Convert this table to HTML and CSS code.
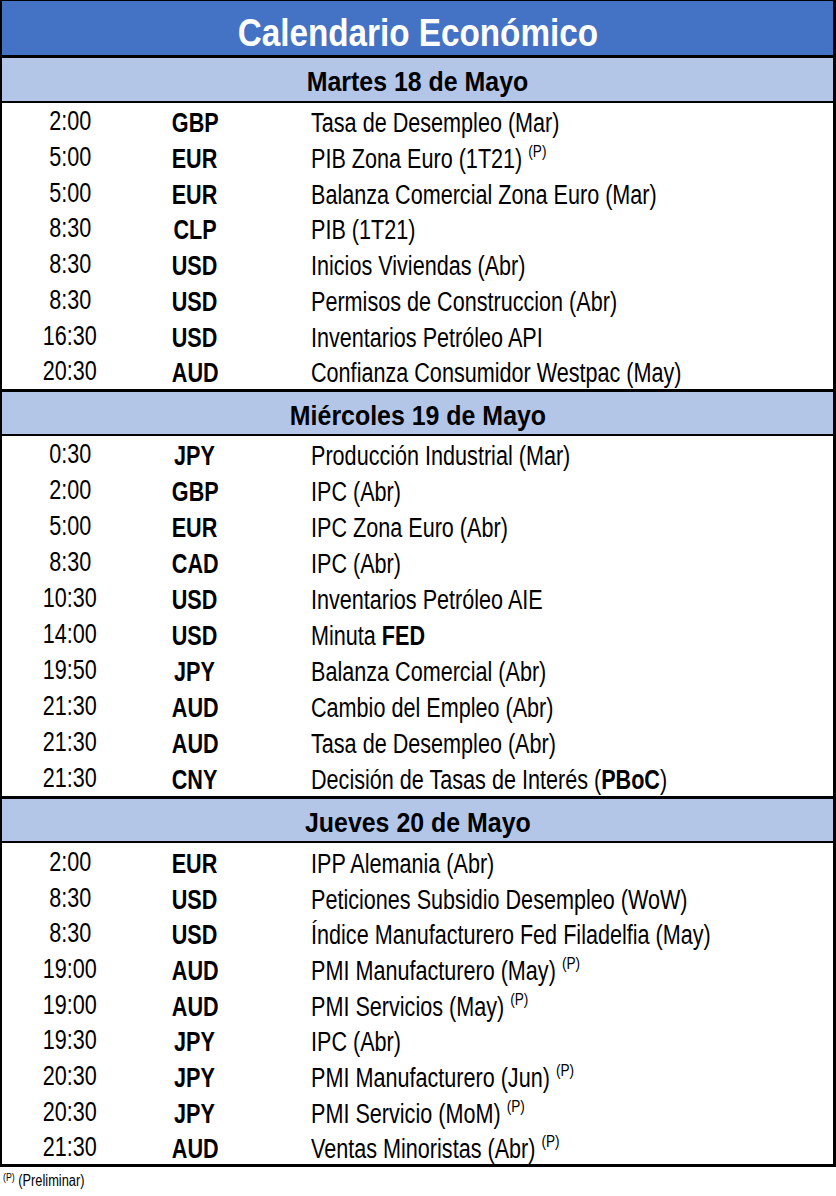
FILE: index.html
```html
<!DOCTYPE html>
<html lang="es">
<head>
<meta charset="utf-8">
<title>Calendario Económico</title>
<link rel="stylesheet" href="styles.css">
</head>
<body>
<div class="cal">
  <div class="title"><span class="nx">Calendario Económico</span></div>

  <div class="day first"><span class="nx">Martes 18 de Mayo</span></div>
  <div class="rows">
    <div class="row"><span class="t"><span class="nx">2:00</span></span><span class="c"><span class="nx">GBP</span></span><span class="d"><span class="nx">Tasa de Desempleo (Mar)</span></span></div>
    <div class="row"><span class="t"><span class="nx">5:00</span></span><span class="c"><span class="nx">EUR</span></span><span class="d"><span class="nx">PIB Zona Euro (1T21) <sup>(P)</sup></span></span></div>
    <div class="row"><span class="t"><span class="nx">5:00</span></span><span class="c"><span class="nx">EUR</span></span><span class="d"><span class="nx">Balanza Comercial Zona Euro (Mar)</span></span></div>
    <div class="row"><span class="t"><span class="nx">8:30</span></span><span class="c"><span class="nx">CLP</span></span><span class="d"><span class="nx">PIB (1T21)</span></span></div>
    <div class="row"><span class="t"><span class="nx">8:30</span></span><span class="c"><span class="nx">USD</span></span><span class="d"><span class="nx">Inicios Viviendas (Abr)</span></span></div>
    <div class="row"><span class="t"><span class="nx">8:30</span></span><span class="c"><span class="nx">USD</span></span><span class="d"><span class="nx">Permisos de Construccion (Abr)</span></span></div>
    <div class="row"><span class="t"><span class="nx">16:30</span></span><span class="c"><span class="nx">USD</span></span><span class="d"><span class="nx">Inventarios Petróleo API</span></span></div>
    <div class="row"><span class="t"><span class="nx">20:30</span></span><span class="c"><span class="nx">AUD</span></span><span class="d"><span class="nx">Confianza Consumidor Westpac (May)</span></span></div>
  </div>

  <div class="day"><span class="nx">Miércoles 19 de Mayo</span></div>
  <div class="rows mid">
    <div class="row"><span class="t"><span class="nx">0:30</span></span><span class="c"><span class="nx">JPY</span></span><span class="d"><span class="nx">Producción Industrial (Mar)</span></span></div>
    <div class="row"><span class="t"><span class="nx">2:00</span></span><span class="c"><span class="nx">GBP</span></span><span class="d"><span class="nx">IPC (Abr)</span></span></div>
    <div class="row"><span class="t"><span class="nx">5:00</span></span><span class="c"><span class="nx">EUR</span></span><span class="d"><span class="nx">IPC Zona Euro (Abr)</span></span></div>
    <div class="row"><span class="t"><span class="nx">8:30</span></span><span class="c"><span class="nx">CAD</span></span><span class="d"><span class="nx">IPC (Abr)</span></span></div>
    <div class="row"><span class="t"><span class="nx">10:30</span></span><span class="c"><span class="nx">USD</span></span><span class="d"><span class="nx">Inventarios Petróleo AIE</span></span></div>
    <div class="row"><span class="t"><span class="nx">14:00</span></span><span class="c"><span class="nx">USD</span></span><span class="d"><span class="nx">Minuta <b>FED</b></span></span></div>
    <div class="row"><span class="t"><span class="nx">19:50</span></span><span class="c"><span class="nx">JPY</span></span><span class="d"><span class="nx">Balanza Comercial (Abr)</span></span></div>
    <div class="row"><span class="t"><span class="nx">21:30</span></span><span class="c"><span class="nx">AUD</span></span><span class="d"><span class="nx">Cambio del Empleo (Abr)</span></span></div>
    <div class="row"><span class="t"><span class="nx">21:30</span></span><span class="c"><span class="nx">AUD</span></span><span class="d"><span class="nx">Tasa de Desempleo (Abr)</span></span></div>
    <div class="row"><span class="t"><span class="nx">21:30</span></span><span class="c"><span class="nx">CNY</span></span><span class="d"><span class="nx">Decisión de Tasas de Interés (<b>PBoC</b>)</span></span></div>
  </div>

  <div class="day"><span class="nx">Jueves 20 de Mayo</span></div>
  <div class="rows last">
    <div class="row"><span class="t"><span class="nx">2:00</span></span><span class="c"><span class="nx">EUR</span></span><span class="d"><span class="nx">IPP Alemania (Abr)</span></span></div>
    <div class="row"><span class="t"><span class="nx">8:30</span></span><span class="c"><span class="nx">USD</span></span><span class="d"><span class="nx">Peticiones Subsidio Desempleo (WoW)</span></span></div>
    <div class="row"><span class="t"><span class="nx">8:30</span></span><span class="c"><span class="nx">USD</span></span><span class="d"><span class="nx">Índice Manufacturero Fed Filadelfia (May)</span></span></div>
    <div class="row"><span class="t"><span class="nx">19:00</span></span><span class="c"><span class="nx">AUD</span></span><span class="d"><span class="nx">PMI Manufacturero (May) <sup>(P)</sup></span></span></div>
    <div class="row"><span class="t"><span class="nx">19:00</span></span><span class="c"><span class="nx">AUD</span></span><span class="d"><span class="nx">PMI Servicios (May) <sup>(P)</sup></span></span></div>
    <div class="row"><span class="t"><span class="nx">19:30</span></span><span class="c"><span class="nx">JPY</span></span><span class="d"><span class="nx">IPC (Abr)</span></span></div>
    <div class="row"><span class="t"><span class="nx">20:30</span></span><span class="c"><span class="nx">JPY</span></span><span class="d"><span class="nx">PMI Manufacturero (Jun) <sup>(P)</sup></span></span></div>
    <div class="row"><span class="t"><span class="nx">20:30</span></span><span class="c"><span class="nx">JPY</span></span><span class="d"><span class="nx">PMI Servicio (MoM) <sup>(P)</sup></span></span></div>
    <div class="row"><span class="t"><span class="nx">21:30</span></span><span class="c"><span class="nx">AUD</span></span><span class="d"><span class="nx">Ventas Minoristas (Abr) <sup>(P)</sup></span></span></div>
  </div>
</div>
<p class="note"><span class="nx"><sup>(P)</sup> (Preliminar)</span></p>
</body>
</html>
```

FILE: styles.css
```css
* { box-sizing: border-box; }

body {
  margin: 0;
  background: #ffffff;
  color: #000000;
  font-family: "Liberation Sans", Arial, sans-serif;
}

/* condensed (Arial Narrow look) */
.nx {
  display: inline-block;
  white-space: nowrap;
  transform: scaleX(0.80);
  transform-origin: center center;
}

.cal {
  width: 836px;
  border-top: 1px solid #000;
  border-left: 2px solid #000;
  border-right: 3px solid #000;
  border-bottom: 3px solid #000;
}

.title {
  height: 54px;
  background: #4472C4;
  color: #ffffff;
  font-weight: bold;
  font-size: 38px;
  line-height: 54px;
  padding-top: 5px;
  text-align: center;
}

.title .nx { transform: scaleX(0.875); }

.day {
  height: 47px;
  padding-top: 3px;
  border-top: 3px solid #000;
  border-bottom: 2px solid #000;
  background: #B4C6E7;
  font-weight: bold;
  font-size: 28px;
  line-height: 42px;
  text-align: center;
}

.day.first { height: 48px; line-height: 44px; padding-top: 2px; }

.day .nx { transform: scaleX(0.89); }

.rows {
  display: flex;
  flex-direction: column;
}

.row {
  height: 35.75px;
  padding-top: 3px;
  display: grid;
  grid-template-columns: 136px 114px 1fr;
  align-items: center;
  font-size: 27px;
  line-height: 30px;
}

.rows.mid .row { height: 36px; padding-top: 3px; }
.rows.last .row { height: 35.67px; padding-top: 4px; }

.t {
  text-align: center;
  padding-bottom: 4px;
}

.c {
  text-align: center;
  font-weight: bold;
}

.d {
  padding-left: 59px;
  white-space: nowrap;
}

.d .nx { transform-origin: left center; }

.d sup {
  font-size: 17px;
  line-height: 0;
  vertical-align: 11px;
}

.note {
  margin: 5px 0 0 3px;
  font-size: 16px;
}

.note .nx { transform-origin: left center; }

.note sup {
  font-size: 11px;
  line-height: 0;
  vertical-align: 5px;
}
```
